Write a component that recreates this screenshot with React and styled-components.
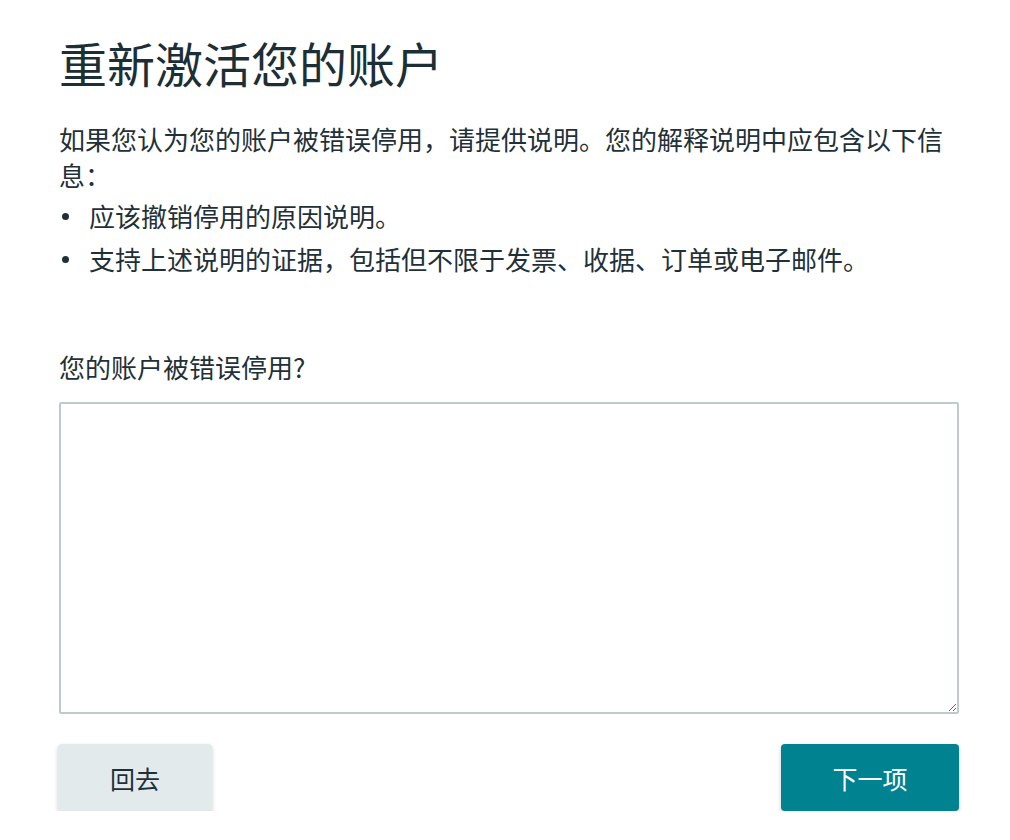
import React from 'react'
import styled, { createGlobalStyle } from 'styled-components'

const GlobalStyle = createGlobalStyle`
  body {
    margin: 0;
    background: #fff;
    font-family: "Noto Sans CJK SC", "Noto Sans", sans-serif;
    color: #1f3138;
  }
`

const Page = styled.div`
  width: 900px;
  padding: 34px 0 0 59px;
`

const Title = styled.h1`
  margin: 0;
  font-size: 48px;
  font-weight: 400;
  line-height: 56px;
  color: #1c2f36;
`

const Intro = styled.p`
  margin: 31px 0 0;
  font-size: 26px;
  line-height: 36px;
`

const List = styled.ul`
  margin: 1px 0 0;
  padding: 0;
  list-style: none;
`

const Item = styled.li`
  position: relative;
  padding-left: 30px;
  font-size: 26px;
  line-height: 43px;
  &::before {
    content: '';
    position: absolute;
    left: 3px;
    top: 19px;
    width: 7px;
    height: 7px;
    border-radius: 50%;
    background: #1f3138;
  }
`

const Label = styled.label`
  display: block;
  margin-top: 69px;
  font-size: 26px;
  line-height: 36px;
`

const TextArea = styled.textarea`
  display: block;
  box-sizing: border-box;
  width: 900px;
  height: 312px;
  margin-top: 17px;
  border: 2px solid #bfcbcb;
  border-radius: 2px;
  background: #fff;
  font-family: inherit;
  font-size: 20px;
  resize: vertical;
  outline: none;
`

const Actions = styled.div`
  display: flex;
  justify-content: space-between;
  margin-top: 30px;
`

const Button = styled.button`
  height: 67px;
  width: ${p => p.$w}px;
  border: none;
  border-radius: 4px;
  font-family: inherit;
  font-size: 25px;
  cursor: pointer;
  background: ${p => (p.$primary ? '#008291' : '#e3eaeb')};
  color: ${p => (p.$primary ? '#fff' : '#1f3138')};
  box-shadow: 0 2px 4px rgba(0, 0, 0, 0.2);
  margin-left: ${p => (p.$primary ? '0' : '-1px')};
`

export default function App() {
  return (
    <>
      <GlobalStyle />
      <Page>
        <Title>重新激活您的账户</Title>
        <Intro>
          如果您认为您的账户被错误停用，请提供说明。您的解释说明中应包含以下信息：
        </Intro>
        <List>
          <Item>应该撤销停用的原因说明。</Item>
          <Item>支持上述说明的证据，包括但不限于发票、收据、订单或电子邮件。</Item>
        </List>
        <Label htmlFor="reason">您的账户被错误停用?</Label>
        <TextArea id="reason" />
        <Actions>
          <Button $w={154}>回去</Button>
          <Button $w={178} $primary>下一项</Button>
        </Actions>
      </Page>
    </>
  )
}
